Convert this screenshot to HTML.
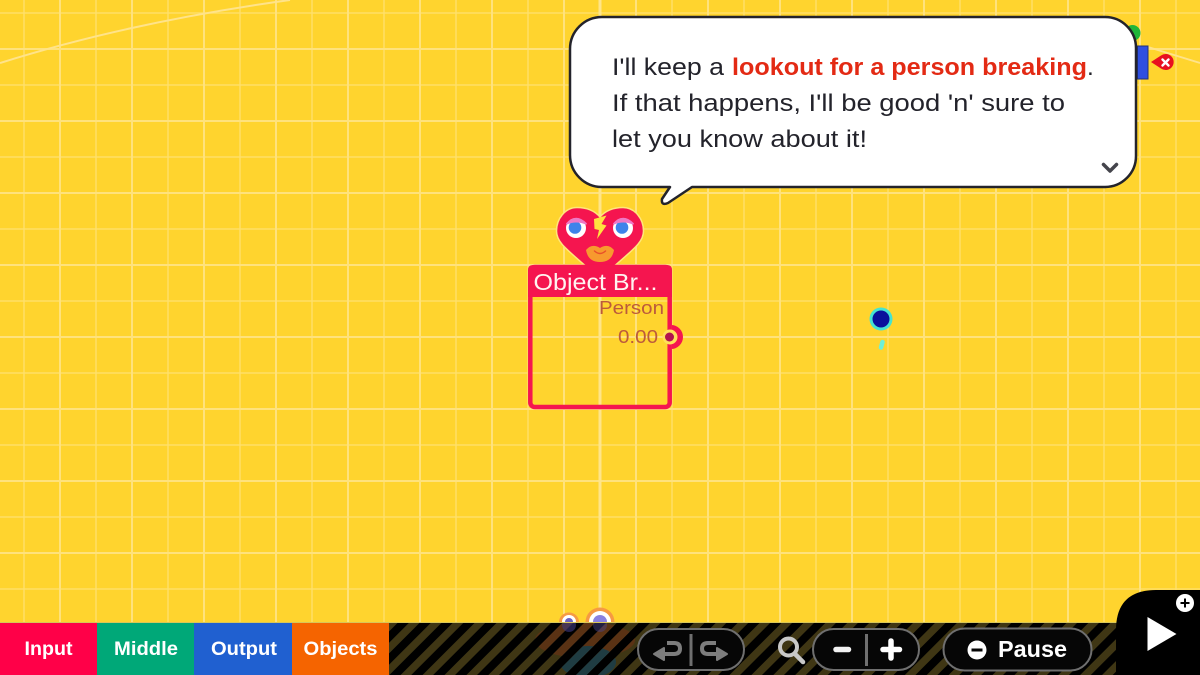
<!DOCTYPE html>
<html><head><meta charset="utf-8"><style>
html,body{margin:0;padding:0;width:1200px;height:675px;overflow:hidden;background:#ffd42e}
svg{display:block;position:absolute;left:0;top:0}
text{font-family:"Liberation Sans",sans-serif}
</style></head><body>
<svg width="1200" height="675" viewBox="0 0 1200 675" xmlns="http://www.w3.org/2000/svg">
<defs>
<pattern id="w" width="72" height="10" patternUnits="userSpaceOnUse" x="-12"><rect x="35.300" width="1.400" height="10" fill="#ffe06a"/></pattern>
<pattern id="s" width="72" height="10" patternUnits="userSpaceOnUse" x="-12"><rect x="-1" width="2" height="10" fill="#ffe27c"/><rect x="71" width="2" height="10" fill="#ffe27c"/></pattern>
<pattern id="hw" width="10" height="72" patternUnits="userSpaceOnUse" y="-23"><rect y="35.300" width="10" height="1.400" fill="#ffe06a"/></pattern>
<pattern id="hs" width="10" height="72" patternUnits="userSpaceOnUse" y="-23"><rect y="-1" width="10" height="2" fill="#ffe27c"/><rect y="71" width="10" height="2" fill="#ffe27c"/></pattern>
<pattern id="st" width="15.500" height="22" patternUnits="userSpaceOnUse" patternTransform="rotate(45 389 623)"><rect width="15.500" height="22" fill="#000"/><rect width="7.500" height="22" fill="#3f3614"/></pattern>
<pattern id="sto" width="15.500" height="22" patternUnits="userSpaceOnUse" patternTransform="rotate(45 389 623)"><rect width="7.500" height="22" fill="#5a3214"/></pattern>
<pattern id="stb" width="15.500" height="22" patternUnits="userSpaceOnUse" patternTransform="rotate(45 389 623)"><rect width="7.500" height="22" fill="#1f3c42"/></pattern>
<clipPath id="ring"><rect x="672" y="320" width="20" height="35"/></clipPath>
<clipPath id="bar"><rect x="389" y="623" width="740" height="52"/></clipPath>
</defs>
<rect width="1200" height="675" fill="#ffd42e"/>
<rect width="1200" height="675" fill="url(#w)"/>
<rect width="1200" height="675" fill="url(#hw)"/>
<rect width="1200" height="675" fill="url(#s)"/>
<rect width="1200" height="675" fill="url(#hs)"/>
<rect x="598.500" y="0" width="3" height="625" fill="#ffe58a"/>
<path d="M0 63Q130 22 290 0" fill="none" stroke="#ffe38a" stroke-width="2"/>
<path d="M1148 47L1200 63" fill="none" stroke="#ffe38a" stroke-width="1.800"/>

<!-- top-right bits -->
<circle cx="1132.500" cy="33" r="8" fill="#1fb53a"/>
<rect x="1137.500" y="46" width="10.500" height="33" fill="#2f4fe0" stroke="#20307a" stroke-width="1"/>
<path d="M1151 62L1161 55.500A8 8 0 1 1 1161 68.500Z" fill="#e8101f"/>
<path d="M1162.500 59.500L1168.500 65.500M1168.500 59.500L1162.500 65.500" stroke="#fff" stroke-width="2.400" stroke-linecap="round"/>

<!-- bubble -->
<path d="M602 17H1105A31 31 0 0 1 1136 48V156A31 31 0 0 1 1105 187H692L668 203Q661 206 662 199L670 187H602A32 32 0 0 1 570 155V49A32 32 0 0 1 602 17Z" fill="#fff" stroke="#23232b" stroke-width="2.500" stroke-linejoin="round"/>
<text x="612" y="75" font-size="24.500" fill="#23232b" textLength="112" lengthAdjust="spacingAndGlyphs">I'll keep a</text>
<text x="732" y="75" font-size="24" fill="#e32a14" font-weight="bold" textLength="355" lengthAdjust="spacingAndGlyphs">lookout for a person breaking</text>
<text x="1087" y="75" font-size="24.500" fill="#23232b">.</text>
<text x="612" y="111" font-size="24.500" fill="#23232b" textLength="453" lengthAdjust="spacingAndGlyphs">If that happens, I'll be good 'n' sure to</text>
<text x="612" y="147" font-size="24.500" fill="#23232b" textLength="255" lengthAdjust="spacingAndGlyphs">let you know about it!</text>
<path d="M1103.500 164.500L1110 171L1116.500 164.500" fill="none" stroke="#44444c" stroke-width="3.500" stroke-linecap="round" stroke-linejoin="round"/>

<!-- heart character -->
<path d="M600 217C594 210 585 207.500 577 207.500C565 207.500 556.500 219 556.500 231C556.500 243 568 250 590 270H610C632 250 643.500 243 643.500 231C643.500 219 635 207.500 623 207.500C615 207.500 606 210 600 217Z" fill="#f5154f" stroke="#ffe77a" stroke-width="1.500"/>
<circle cx="576" cy="228" r="10" fill="#fff"/><circle cx="575" cy="227.500" r="6.300" fill="#3d83ea"/>
<circle cx="623" cy="228" r="10" fill="#fff"/><circle cx="622" cy="227.500" r="6.300" fill="#3d83ea"/>
<path d="M566.500 224Q576 213 586.500 224Q576 219.500 566.500 224Z" fill="#ee78c6" stroke="#ee78c6" stroke-width="1.500"/>
<path d="M613.500 224Q623 213 633.500 224Q623 219.500 613.500 224Z" fill="#ee78c6" stroke="#ee78c6" stroke-width="1.500"/>
<path d="M594 219L606.500 215.500L601.500 224L606.500 225.500L597 239L599 230L594.500 229Z" fill="#ffe33f"/>
<path d="M586 250Q592 243 600 248Q608 243 614 250Q612 262 600 262Q588 262 586 250Z" fill="#f79a2e"/>
<path d="M594.500 251Q600 256 605.500 251" fill="none" stroke="#e8502a" stroke-width="1.500" stroke-linecap="round"/>

<!-- node -->
<rect x="530.300" y="267" width="139.400" height="140" rx="4.500" fill="none" stroke="#f5154f" stroke-width="4.500"/>
<path d="M528 270Q528 265 533 265H667Q672 265 672 270V297H528Z" fill="#f5154f"/>
<text x="533.500" y="290" font-size="23" fill="#fff3f0" textLength="124" lengthAdjust="spacingAndGlyphs">Object Br...</text>
<text x="599" y="314" font-size="18.500" fill="#bc5a3c" textLength="65" lengthAdjust="spacingAndGlyphs">Person</text>
<text x="618" y="343" font-size="18.500" fill="#bc5a3c" textLength="40" lengthAdjust="spacingAndGlyphs">0.00</text>
<circle cx="671" cy="337" r="12" fill="#f5154f" clip-path="url(#ring)"/>
<circle cx="670" cy="337" r="7.500" fill="#ffe05a"/>
<circle cx="669.500" cy="337" r="4.500" fill="#b3124e"/>

<!-- dot -->
<circle cx="881" cy="319" r="11.500" fill="#45e3d2"/>
<circle cx="881" cy="319" r="8.500" fill="#0a109c"/>
<path d="M882.500 342L881 347.500" stroke="#6ff0d8" stroke-width="4.500" stroke-linecap="round"/>

<!-- bottom bar -->
<rect x="389" y="623" width="740" height="52" fill="url(#st)"/>
<rect x="0" y="622" width="1130" height="1" fill="#d8c658"/>
<g clip-path="url(#bar)">
<ellipse cx="585" cy="640" rx="50" ry="18" fill="url(#sto)"/>
<ellipse cx="588" cy="662" rx="28" ry="16" fill="url(#stb)"/>
<circle cx="569" cy="625" r="7" fill="#3d3880" opacity=".6"/>
<circle cx="600" cy="625" r="7" fill="#4a4490" opacity=".45"/>
</g>
<!-- bubbles at bar -->
<path d="M585.500 622A14.500 14.500 0 0 1 614.500 622Z" fill="#f69a42"/>
<path d="M589 622A11 11 0 0 1 611 622Z" fill="#fff"/>
<path d="M593 622A7 7 0 0 1 607 622Z" fill="#8a80e0"/>
<path d="M559 622A10 9.500 0 0 1 579 622Z" fill="#f69a42"/>
<path d="M562 622A7 7 0 0 1 576 622Z" fill="#fff"/>
<path d="M565 622A4 4 0 0 1 573 622Z" fill="#6a60c0"/>
<rect x="0" y="623" width="97" height="52" fill="#ff0048"/>
<rect x="97" y="623" width="97" height="52" fill="#00a878"/>
<rect x="194" y="623" width="98" height="52" fill="#2060d0"/>
<rect x="292" y="623" width="97" height="52" fill="#f56400"/>
<g fill="#fff" font-size="19.500" font-weight="bold">
<text x="24.500" y="655" textLength="48" lengthAdjust="spacingAndGlyphs">Input</text>
<text x="114" y="655" textLength="64" lengthAdjust="spacingAndGlyphs">Middle</text>
<text x="211" y="655" textLength="66" lengthAdjust="spacingAndGlyphs">Output</text>
<text x="303.500" y="655" textLength="74" lengthAdjust="spacingAndGlyphs">Objects</text>
</g>

<!-- undo/redo -->
<rect x="638" y="629" width="106" height="41" rx="20.500" fill="#060606" stroke="#6f6f6f" stroke-width="2"/>
<rect x="689.500" y="634" width="3" height="32" fill="#6f6f6f"/>
<path d="M662 654H674Q680 654 680 648.500Q680 643 674 643H667" fill="none" stroke="#7d7d7d" stroke-width="4"/>
<path d="M654 654L664 648V660Z" fill="#7d7d7d" stroke="#7d7d7d" stroke-width="2" stroke-linejoin="round"/>
<path d="M718 654H708Q702 654 702 648.500Q702 643 708 643H716" fill="none" stroke="#7d7d7d" stroke-width="4"/>
<path d="M727 654L717 648V660Z" fill="#7d7d7d" stroke="#7d7d7d" stroke-width="2" stroke-linejoin="round"/>

<!-- magnifier -->
<circle cx="788.500" cy="647" r="8.500" fill="none" stroke="#c8c8c8" stroke-width="4"/>
<path d="M795 654L803 662" stroke="#c8c8c8" stroke-width="4.500" stroke-linecap="round"/>

<!-- zoom -->
<rect x="813" y="629" width="106" height="41" rx="20.500" fill="#060606" stroke="#6f6f6f" stroke-width="2"/>
<rect x="865" y="634" width="3" height="32" fill="#6f6f6f"/>
<path d="M836 649.500H848.500" stroke="#f2f2f2" stroke-width="5.500" stroke-linecap="round"/>
<path d="M883 649.500H899.500M891 641V658" stroke="#fff" stroke-width="5.500" stroke-linecap="round"/>

<!-- pause -->
<rect x="943.500" y="628.500" width="148" height="42" rx="21" fill="#060606" stroke="#6f6f6f" stroke-width="2"/>
<circle cx="977" cy="650" r="9.500" fill="#fff"/>
<rect x="971.500" y="648.500" width="11" height="3" fill="#060606"/>
<text x="998" y="657" font-size="23.500" font-weight="bold" fill="#fff" textLength="69" lengthAdjust="spacingAndGlyphs">Pause</text>

<!-- play -->
<path d="M1116 675V630Q1116 590 1156 590H1200V675Z" fill="#000"/>
<path d="M1147.500 617L1176.500 634L1147.500 651Z" fill="#fff"/>
<circle cx="1185" cy="603" r="9" fill="#fff"/>
<path d="M1180.500 603H1189.500M1185 598.500V607.500" stroke="#000" stroke-width="2"/>
</svg>
</body></html>
